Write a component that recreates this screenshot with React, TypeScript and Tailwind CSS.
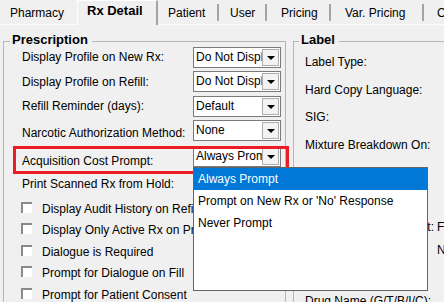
import React from 'react';

type ComboProps = { value: string; className?: string };

const Combo: React.FC<ComboProps> = ({ value, className = '' }) => (
  <div className={`flex h-[21px] w-[88px] shrink-0 border border-[#7a7a7a] bg-white ${className}`}>
    <div className="flex-1 overflow-hidden whitespace-nowrap pl-[2px] leading-[19px]">{value}</div>
    <div className="my-px mr-px flex w-[17px] items-center justify-center border border-[#adadad] bg-[#f3f3f3]">
      <svg width="8" height="4" viewBox="0 0 8 4">
        <path d="M0 0h8L4 4z" fill="#000" />
      </svg>
    </div>
  </div>
);

const CheckRow: React.FC<{ label: string; height: string }> = ({ label, height }) => (
  <div className={`flex items-start pl-[17px] ${height}`}>
    <div className="mt-px h-[11px] w-[11px] shrink-0 border-l-2 border-t-2 border-[#8a8a8a] bg-white" />
    <div className="ml-[10px] mt-px whitespace-nowrap leading-[14px]">{label}</div>
  </div>
);

// unselected tabs to the right of the active one, each followed by a divider
const tabs = [
  { name: 'Patient', cls: 'w-[59px] pl-[10px]' },
  { name: 'User', cls: 'w-[46px] pl-[11px]' },
  { name: 'Pricing', cls: 'w-[62px] pl-[14px]' },
  { name: 'Var. Pricing', cls: 'w-[91px] pl-[14px]' },
];

const promptOptions = ['Always Prompt', "Prompt on New Rx or 'No' Response", 'Never Prompt'];

export default function App() {
  return (
    <div className="relative h-[302px] w-[444px] overflow-hidden bg-[#f0f0f0] font-['Liberation_Sans',Arial,sans-serif] text-[12px] text-black">
      {/* tab strip */}
      <div className="flex h-[25px] border-b border-[#fcfcfc] leading-[14px]">
        <div className="w-[77px] shrink-0 pl-[10px] pt-[6px]">Pharmacy</div>
        <div className="relative -mb-px h-[25px] w-[81px] shrink-0 border-l border-t border-r-2 border-l-white border-t-white border-r-[#a3a3a3] bg-[#f0f0f0] pl-[9px] pt-[3px] text-[13px] font-bold">
          Rx Detail
        </div>
        {tabs.map((t) => (
          <React.Fragment key={t.name}>
            <div className={`shrink-0 whitespace-nowrap pt-[6px] ${t.cls}`}>{t.name}</div>
            <div className="mt-[4px] h-[17px] w-[2px] shrink-0 bg-[#a3a3a3]" />
          </React.Fragment>
        ))}
        <div className="shrink-0 whitespace-nowrap pl-[13px] pt-[6px]">Clinical</div>
      </div>

      {/* group boxes */}
      <div className="mt-[16px] flex pl-[3px]">
        <div className="h-[270px] w-[283px] shrink-0 border border-[#b5b5b5]">
          <div className="-mt-[9px] ml-[6px] w-fit bg-[#f0f0f0] pl-[2px] pr-[4px] text-[13px] font-bold leading-[14px]">
            Prescription
          </div>

          <div className="flex h-[24px] items-start pl-[18px]">
            <div className="mt-[3px] w-[171px] shrink-0 whitespace-nowrap leading-[14px]">Display Profile on New Rx:</div>
            <Combo value="Do Not Display" />
          </div>
          <div className="flex h-[25px] items-start pl-[18px]">
            <div className="mt-[4px] w-[171px] shrink-0 whitespace-nowrap leading-[14px]">Display Profile on Refill:</div>
            <Combo value="Do Not Display" />
          </div>
          <div className="flex h-[24px] items-start pl-[18px]">
            <div className="mt-[3px] w-[171px] shrink-0 whitespace-nowrap leading-[14px]">Refill Reminder (days):</div>
            <Combo value="Default" />
          </div>
          <div className="flex h-[25px] items-start pl-[18px]">
            <div className="mt-[6px] w-[171px] shrink-0 whitespace-nowrap leading-[14px]">Narcotic Authorization Method:</div>
            <Combo value="None" />
          </div>
          <div className="flex h-[32px] items-start pl-[18px]">
            <div className="mt-[9px] w-[171px] shrink-0 whitespace-nowrap leading-[14px]">Acquisition Cost Prompt:</div>
            <Combo value="Always Prompt" className="mt-px" />
          </div>
          <div className="h-[24px] pl-[18px] leading-[14px]">Print Scanned Rx from Hold:</div>

          <CheckRow label="Display Audit History on Refill" height="h-[21px]" />
          <CheckRow label="Display Only Active Rx on Profile" height="h-[22px]" />
          <CheckRow label="Dialogue is Required" height="h-[21px]" />
          <CheckRow label="Prompt for Dialogue on Fill" height="h-[22px]" />
          <CheckRow label="Prompt for Patient Consent" height="h-[21px]" />
        </div>

        <div className="ml-[7px] h-[270px] w-[170px] shrink-0 border border-[#b5b5b5] leading-[14px]">
          <div className="-mt-[9px] ml-[5px] w-fit bg-[#f0f0f0] pl-[2px] pr-[4px] text-[13px] font-bold">Label</div>
          <div className="mt-[8px] h-[28px] whitespace-nowrap pl-[11px]">Label Type:</div>
          <div className="h-[27px] whitespace-nowrap pl-[11px]">Hard Copy Language:</div>
          <div className="h-[28px] whitespace-nowrap pl-[11px]">SIG:</div>
          <div className="h-[82px] whitespace-nowrap pl-[11px]">Mixture Breakdown On:</div>
          <div className="flex h-[23px] whitespace-nowrap pl-[11px]">
            <div className="w-[129px] shrink-0 text-right">Label Format:</div>
            <div className="ml-[3px]">Full Page</div>
          </div>
          <div className="flex h-[51px] whitespace-nowrap pl-[11px]">
            <div className="w-[129px] shrink-0">Print Generic Name:</div>
            <div className="ml-[3px]">No</div>
          </div>
          <div className="whitespace-nowrap pl-[11px]">Drug Name (G/T/B/I/C):</div>
        </div>
      </div>

      {/* annotation */}
      <div className="absolute left-[13px] top-[146px] h-[28px] w-[276px] border-[3px] border-[#ed1c24]" />

      {/* open dropdown list */}
      <div className="absolute left-[193px] top-[167px] h-[124px] w-[235px] border border-[#646464] bg-white">
        {promptOptions.map((opt, i) => (
          <div
            key={opt}
            className={`h-[22px] whitespace-nowrap pl-[4px] leading-[22px] ${i === 0 ? 'bg-[#0078d7] text-white' : ''}`}
          >
            {opt}
          </div>
        ))}
      </div>
    </div>
  );
}
